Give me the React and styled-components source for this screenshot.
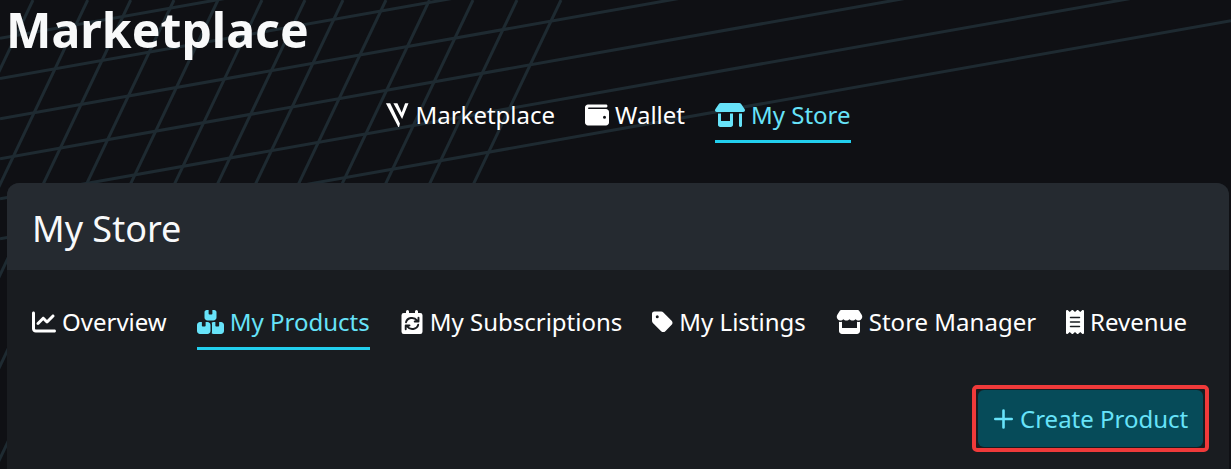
import React from "react";
import styled, { createGlobalStyle, css } from "styled-components";
import { FaWallet, FaShop, FaChartLine, FaBoxesStacked, FaTag, FaStore, FaReceipt } from "react-icons/fa6";

const GlobalStyle = createGlobalStyle`
  * { box-sizing: border-box; }
  body {
    margin: 0;
    background: #0f1014;
    font-family: "Noto Sans", sans-serif;
    color: #fff;
    overflow: hidden;
  }
`;

const Page = styled.div`
  position: relative;
  width: 1231px;
  height: 469px;
  overflow: hidden;
  padding: 0 2px 0 7px;
`;

const Backdrop = styled.svg`
  position: absolute;
  inset: 0;
  z-index: -1;
`;

const Title = styled.h1`
  margin: 0 0 0 -1px;
  height: 92px;
  font-size: 48.2px;
  line-height: 59px;
  font-weight: 700;
  color: #f8f9fa;
`;

const Tabs = styled.nav`
  display: flex;
  gap: 30px;
  justify-content: ${(p) => (p.$centered ? "center" : "flex-start")};
`;

const Tab = styled.a`
  display: flex;
  align-items: center;
  gap: 6px;
  height: 51px;
  padding-bottom: 3px;
  border-bottom: 3px solid transparent;
  font-size: 24px;
  line-height: 36px;
  white-space: nowrap;
  ${(p) =>
    p.$active &&
    css`
      color: #67e3f9;
      border-color: #22cfee;
    `}
`;

const IconSlot = styled.span`
  display: flex;
  flex: none;
  width: ${(p) => p.$width}px;
  height: 24px;
  svg { width: 100%; height: 100%; }
`;

const Card = styled.section`
  margin-top: 40px;
  height: 300px;
  background: #191c20;
  border-radius: 12px 12px 0 0;
  overflow: hidden;
`;

const CardHeader = styled.header`
  height: 87px;
  padding: 0 25px;
  background: #252a30;
  font-size: 36px;
  line-height: 92px;
  color: #f8f9fa;
`;

const CardBody = styled.div`
  padding: 29px 20px 0 25px;
`;

const Actions = styled.div`
  display: flex;
  justify-content: flex-end;
  margin-top: 35px;
`;

const Highlight = styled.div`
  border: 4px solid #f03a3a;
  border-radius: 5px;
  padding: 1px 2px;
`;

const CreateButton = styled.button`
  display: flex;
  align-items: center;
  gap: 7px;
  height: 57px;
  width: 225px;
  padding: 0 0 0 16px;
  border: 0;
  border-radius: 6px;
  background: #064b59;
  color: #67e3f9;
  font: 24px/36px "Noto Sans", sans-serif;
  white-space: nowrap;
`;

const steep = [33, 87.7, 130.7, 174, 218, 262, 305, 343, 386, 429.5, 473, 517, 561];
const shallow = [38.3, 78.5, 118.7, 158.7, 198.7, 238.7];

const Grid = () => (
  <Backdrop width="1231" height="469" stroke="#1e2a31" strokeWidth="3">
    {steep.map((x) => (
      <line key={x} x1={x} y1="0" x2={x - 469 * 0.4754} y2="469" />
    ))}
    {shallow.map((y) => (
      <line key={y} x1="0" y1={y} x2="1231" y2={y - 1231 * 0.1771} />
    ))}
  </Backdrop>
);

const BrandMark = () => (
  <svg viewBox="-0.9 0 24 24" fill="currentColor">
    <path d="M0 0.2h4.3L14 20.5 13.2 24h-.8z" />
    <path d="M7.5 0.2h4L15.8 9.5 19.2 0.2H22.6L16.2 16z" />
  </svg>
);

const CalendarSync = () => (
  <svg viewBox="-1.5 0 24 24">
    <path
      fill="currentColor"
      d="M6 0a1.5 1.5 0 0 1 1.5 1.5V3h6V1.5a1.5 1.5 0 0 1 3 0V3h2.25A2.25 2.25 0 0 1 21 5.25v16.5A2.25 2.25 0 0 1 18.75 24H2.25A2.25 2.25 0 0 1 0 21.75V5.25A2.25 2.25 0 0 1 2.25 3H4.5V1.5A1.5 1.5 0 0 1 6 0z"
    />
    <g fill="none" stroke="#191c20" strokeWidth="1.9" strokeLinecap="round" strokeLinejoin="round">
      <path d="M4.5 12.3C5.7 7.5 12.5 6.4 15.5 10.5M17 7.8v3.7h-3.8" />
      <path d="M16.7 14.7C15.5 19.5 8.7 20.6 5.7 16.5M4.2 19.2v-3.7H8" />
    </g>
  </svg>
);

const PlusMark = () => (
  <svg width="19" height="20" viewBox="0 0 19 20" fill="none" stroke="currentColor" strokeWidth="2.6" strokeLinecap="round">
    <path d="M9.5 1.5v17M1.3 10h16.4" />
  </svg>
);

const sections = [
  { label: "Marketplace", icon: BrandMark, width: 24 },
  { label: "Wallet", icon: FaWallet, width: 24 },
  { label: "My Store", icon: FaShop, width: 30, active: true },
];

const storeTabs = [
  { label: "Overview", icon: FaChartLine, width: 24 },
  { label: "My Products", icon: FaBoxesStacked, width: 27, active: true },
  { label: "My Subscriptions", icon: CalendarSync, width: 24 },
  { label: "My Listings", icon: FaTag, width: 21 },
  { label: "Store Manager", icon: FaStore, width: 27 },
  { label: "Revenue", icon: FaReceipt, width: 18 },
];

const TabList = ({ items, centered }) => (
  <Tabs $centered={centered}>
    {items.map(({ label, icon: Icon, width, active }) => (
      <Tab key={label} $active={active}>
        <IconSlot $width={width}>
          <Icon />
        </IconSlot>
        {label}
      </Tab>
    ))}
  </Tabs>
);

export default function App() {
  return (
    <Page>
      <GlobalStyle />
      <Grid />
      <Title>Marketplace</Title>
      <TabList items={sections} centered />
      <Card>
        <CardHeader>My Store</CardHeader>
        <CardBody>
          <TabList items={storeTabs} />
          <Actions>
            <Highlight>
              <CreateButton>
                <PlusMark />
                Create Product
              </CreateButton>
            </Highlight>
          </Actions>
        </CardBody>
      </Card>
    </Page>
  );
}
